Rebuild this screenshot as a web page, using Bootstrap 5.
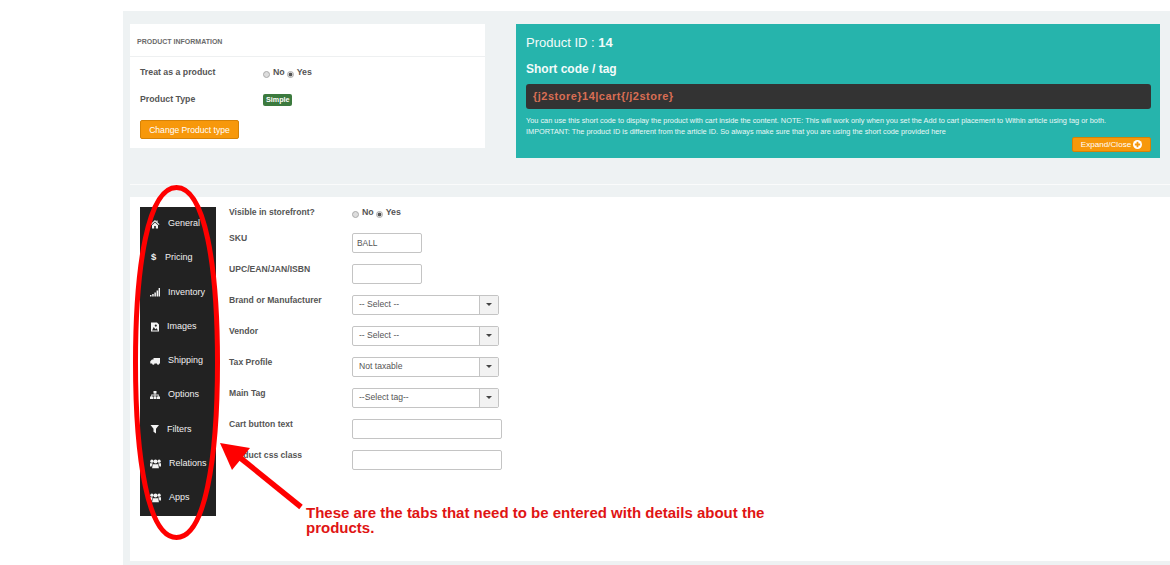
<!DOCTYPE html>
<html lang="en">
<head>
<meta charset="utf-8">
<title>Product</title>
<link rel="stylesheet" href="https://cdn.jsdelivr.net/npm/bootstrap@5.3.0/dist/css/bootstrap.min.css">
<style>
html,body{height:100%;}
body{background:#fff;font-family:"Liberation Sans",Arial,sans-serif;font-size:9px;color:#555;overflow:hidden;}
.page-shell{position:relative;width:1170px;height:565px;overflow:hidden;padding:11px 0 0 123px;}
.gray-panel{background:#eef2f3;height:554px;padding:13px 0 0 7px;}
.info-box{width:355px;height:124px;background:#fff;}
.info-head{height:33px;border-bottom:1px solid #eef0f1;padding:13px 0 0 7px;font-size:7px;font-weight:700;color:#6b6b6b;text-transform:uppercase;line-height:9px;}
.info-body{padding:9px 10px 0;}
.info-row{display:flex;height:27px;font-weight:700;font-size:8.75px;}
.info-label{width:123px;line-height:12px;}
.radio-set{display:flex;align-items:flex-start;line-height:11px;font-weight:700;color:#555;padding-top:1px;font-size:8.8px;}
.radio-flush{padding-top:0;}
.radio-dot{appearance:none;width:7px;height:7px;margin:4px 3px 0 0;border:1px solid #aaa;border-radius:50%;background:#ddd;}
.radio-dot:checked{background:radial-gradient(circle,#555 0 1.5px,#e4e4e4 2.2px);}
.radio-dot.second{margin-left:2px;}
.type-badge{background:#3c7a3e;color:#fff;font-size:7.2px;font-weight:700;border-radius:2px;height:12px;line-height:12px;padding:0 3px;width:29px;margin-top:1px;white-space:nowrap;}
.orange-btn{background:#f7980b;border:1px solid #d68206;color:#fff;border-radius:2px;padding:0;}
.change-btn{width:99px;height:19px;font-size:8.6px;line-height:16px;display:block;}
.teal-box{width:644px;height:134px;background:#26b4ac;margin-left:31px;padding:11px 9px 0 10px;color:#fff;}
.teal-id{font-size:13px;line-height:16px;color:#f2fbfa;}
.teal-tag{font-size:12px;font-weight:700;line-height:14px;margin-top:11px;color:#f2fbfa;}
.code-strip{background:#333;border-radius:3px;height:25px;line-height:25px;margin-top:8px;padding-left:7px;color:#d96e54;font-size:11px;font-weight:700;letter-spacing:.49px;}
.teal-note{font-size:7.35px;line-height:11px;margin-top:6px;color:#eaf8f7;white-space:nowrap;}
.expand-row{display:flex;justify-content:flex-end;margin-top:0;}
.expand-btn{width:79px;height:15px;font-size:8.1px;line-height:13px;display:flex;align-items:center;justify-content:center;gap:2px;}
.rule-line{height:1px;background:#fafbfb;margin-top:26px;}
.form-panel{background:#fff;height:364px;margin-top:12px;padding:10px 0 0 10px;display:flex;}
.side-tabs{width:76px;height:309px;background:#222;padding:0;list-style:none;margin:0;display:flex;flex-direction:column;}
.side-tabs li{height:34.25px;display:flex;align-items:center;color:#f0f0f0;font-size:9px;padding-left:10px;padding-bottom:.6px;}
.side-tabs svg{width:10px;height:10px;fill:#f3f3f3;flex:none;}
.dollar-mark{margin-left:1px;font-size:9.5px;width:14px;margin-top:-1px;}
.fields{margin-left:13px;}
.field-row{display:flex;height:31px;font-weight:700;font-size:8.6px;}
.field-label{width:123px;line-height:11px;}
.field-box{border:1px solid #c4c4c4;border-radius:2px;height:20px;background:#fff;font-size:8.4px;font-weight:400;color:#555;padding:0 4px;}
.box-short{width:70px;}
.box-wide{width:150px;}
.combo{width:147px;height:20px;border:1px solid #c4c4c4;border-radius:2px;display:flex;font-size:8.6px;font-weight:400;line-height:17px;color:#555;background:#fff;}
.combo-text{flex:1;padding-left:6px;}
.combo-caret{width:19px;border-left:1px solid #c4c4c4;background:#f2f2f2;position:relative;}
.combo-caret::after{content:"";position:absolute;left:6px;top:7px;border:3px solid transparent;border-top:3px solid #444;border-bottom:0;}
.over-art{position:absolute;left:0;top:0;width:1170px;height:565px;pointer-events:none;}
.over-note{position:absolute;left:306px;top:505px;width:480px;font-size:15px;font-weight:700;line-height:15px;color:#e01414;}
</style>
</head>
<body>
<div class="page-shell">
  <div class="gray-panel">
    <div class="d-flex">
      <div class="info-box">
        <div class="info-head">Product Information</div>
        <div class="info-body">
          <div class="info-row"><div class="info-label">Treat as a product</div>
            <div class="radio-set"><input class="radio-dot" type="radio" name="r1">No<input class="radio-dot second" type="radio" name="r1" checked>Yes</div></div>
          <div class="info-row"><div class="info-label">Product Type</div><span class="type-badge">Simple</span></div>
          <button type="button" class="btn orange-btn change-btn">Change Product type</button>
        </div>
      </div>
      <div class="teal-box">
        <div class="teal-id">Product ID : <b>14</b></div>
        <div class="teal-tag">Short code / tag</div>
        <div class="code-strip">{j2store}14|cart{/j2store}</div>
        <div class="teal-note">You can use this short code to display the product with cart inside the content. NOTE: This will work only when you set the Add to cart placement to Within article using tag or both.<br>IMPORTANT: The product ID is different from the article ID. So always make sure that you are using the short code provided here</div>
        <div class="expand-row"><button type="button" class="btn orange-btn expand-btn">Expand/Close
          <svg width="9" height="9" viewBox="0 0 10 10"><circle cx="5" cy="5" r="5" fill="#fff"/><path d="M4 2h2v2h2v2H6v2H4V6H2V4h2z" fill="#f7980b"/></svg></button></div>
      </div>
    </div>
    <div class="rule-line"></div>
    <div class="form-panel">
      <ul class="side-tabs">
        <li><svg viewBox="0 0 10 10"><path d="M5 1 .5 5.200l.7.7L5 2.400l3.800 3.500.7-.7L7.600 3.400V1.500H6.500v.9zM2 6.300V9.500h2.200V7h1.600v2.500H8V6.300L5 3.500z"/></svg><span style="margin-left:8px">General</span></li>
        <li><b class="dollar-mark">$</b><span>Pricing</span></li>
        <li><svg viewBox="0 0 10 10"><path d="M0 8h1.500v1.500H0zM2.200 7h1.500v2.500H2.200zM4.400 5.500h1.500v4H4.400zM6.600 3.500h1.500v6H6.600zM8.600 1H10v8.500H8.600z"/></svg><span style="margin-left:8px">Inventory</span></li>
        <li><svg viewBox="0 0 10 10"><path fill-rule="evenodd" d="M1 .5h6l2 2v7H1zM2.100 8.500h5.800L6.600 6.200 5.300 7.300 3.700 5zM5.800 2.500a1.100 1.100 0 1 0 0 2.200 1.100 1.100 0 0 0 0-2.200z"/></svg><span style="margin-left:7px">Images</span></li>
        <li><svg viewBox="0 0 10 10"><path d="M3.500 2h6.500v5.500H9.300a1.200 1.200 0 0 1-2.400 0H4.500a1.200 1.200 0 0 1-2.400 0H.3V5.300L2 3.500h1.500z"/></svg><span style="margin-left:8px">Shipping</span></li>
        <li><svg viewBox="0 0 10 10"><path d="M3.500 1h3v2.500H5.400v1.100h3.300v1.900H10V9H7V6.500h.9V5.400H5.400v1.100h1.100V9h-3V6.500h1.100V5.400H2.100v1.100H3V9H0V6.500h1.300V4.600h3.300V3.500H3.500z"/></svg><span style="margin-left:8px">Options</span></li>
        <li><svg viewBox="0 0 10 10"><path d="M.5 1h8.500L6 4.800V9.500L3.500 7.800V4.800z"/></svg><span style="margin-left:7px">Filters</span></li>
        <li><svg viewBox="0 0 11 10" style="width:11px"><circle cx="5.500" cy="2.600" r="2"/><circle cx="1.900" cy="2.200" r="1.600"/><circle cx="9.100" cy="2.200" r="1.600"/><path d="M2.700 5.300h5.600l.6 4H2.100zM0 4.300h2.600L1.500 7.600H0zM8.400 4.300H11v3.300H9.500z"/></svg><span style="margin-left:8px">Relations</span></li>
        <li><svg viewBox="0 0 11 10" style="width:11px"><circle cx="5.500" cy="2.600" r="2"/><circle cx="1.900" cy="2.200" r="1.600"/><circle cx="9.100" cy="2.200" r="1.600"/><path d="M2.700 5.300h5.600l.6 4H2.100zM0 4.300h2.600L1.500 7.600H0zM8.400 4.300H11v3.300H9.500z"/></svg><span style="margin-left:8px">Apps</span></li>
      </ul>
      <div class="fields">
        <div class="field-row" style="height:26px"><div class="field-label">Visible in storefront?</div>
          <div class="radio-set radio-flush"><input class="radio-dot" type="radio" name="r2">No<input class="radio-dot second" type="radio" name="r2" checked>Yes</div></div>
        <div class="field-row"><div class="field-label">SKU</div><input class="field-box box-short" type="text" value="BALL" aria-label="SKU"></div>
        <div class="field-row"><div class="field-label">UPC/EAN/JAN/ISBN</div><input class="field-box box-short" type="text" aria-label="UPC"></div>
        <div class="field-row"><div class="field-label">Brand or Manufacturer</div><div class="combo"><div class="combo-text">-- Select --</div><div class="combo-caret"></div></div></div>
        <div class="field-row"><div class="field-label">Vendor</div><div class="combo"><div class="combo-text">-- Select --</div><div class="combo-caret"></div></div></div>
        <div class="field-row"><div class="field-label">Tax Profile</div><div class="combo"><div class="combo-text">Not taxable</div><div class="combo-caret"></div></div></div>
        <div class="field-row"><div class="field-label">Main Tag</div><div class="combo"><div class="combo-text">--Select tag--</div><div class="combo-caret"></div></div></div>
        <div class="field-row"><div class="field-label">Cart button text</div><input class="field-box box-wide" type="text" aria-label="Cart button text"></div>
        <div class="field-row"><div class="field-label">Product css class</div><input class="field-box box-wide" type="text" aria-label="Product css class"></div>
      </div>
    </div>
  </div>
  <svg class="over-art" viewBox="0 0 1170 565">
    <path d="M176.500 187.500C205 187.500 217.500 266 217.500 362.500S205 537.500 176.500 537.500 135.500 459 135.500 362.500 148 187.500 176.500 187.500z" fill="none" stroke="#f00" stroke-width="5"/>
    <path d="M301 507 238 456" stroke="#f00" stroke-width="5.500" fill="none"/>
    <path d="M220 443 250 448 232 470z" fill="#f00"/>
  </svg>
  <div class="over-note">These are the tabs that need to be entered with details about the products.</div>
</div>
<script src="https://cdn.jsdelivr.net/npm/bootstrap@5.3.0/dist/js/bootstrap.bundle.min.js"></script>
</body>
</html>
